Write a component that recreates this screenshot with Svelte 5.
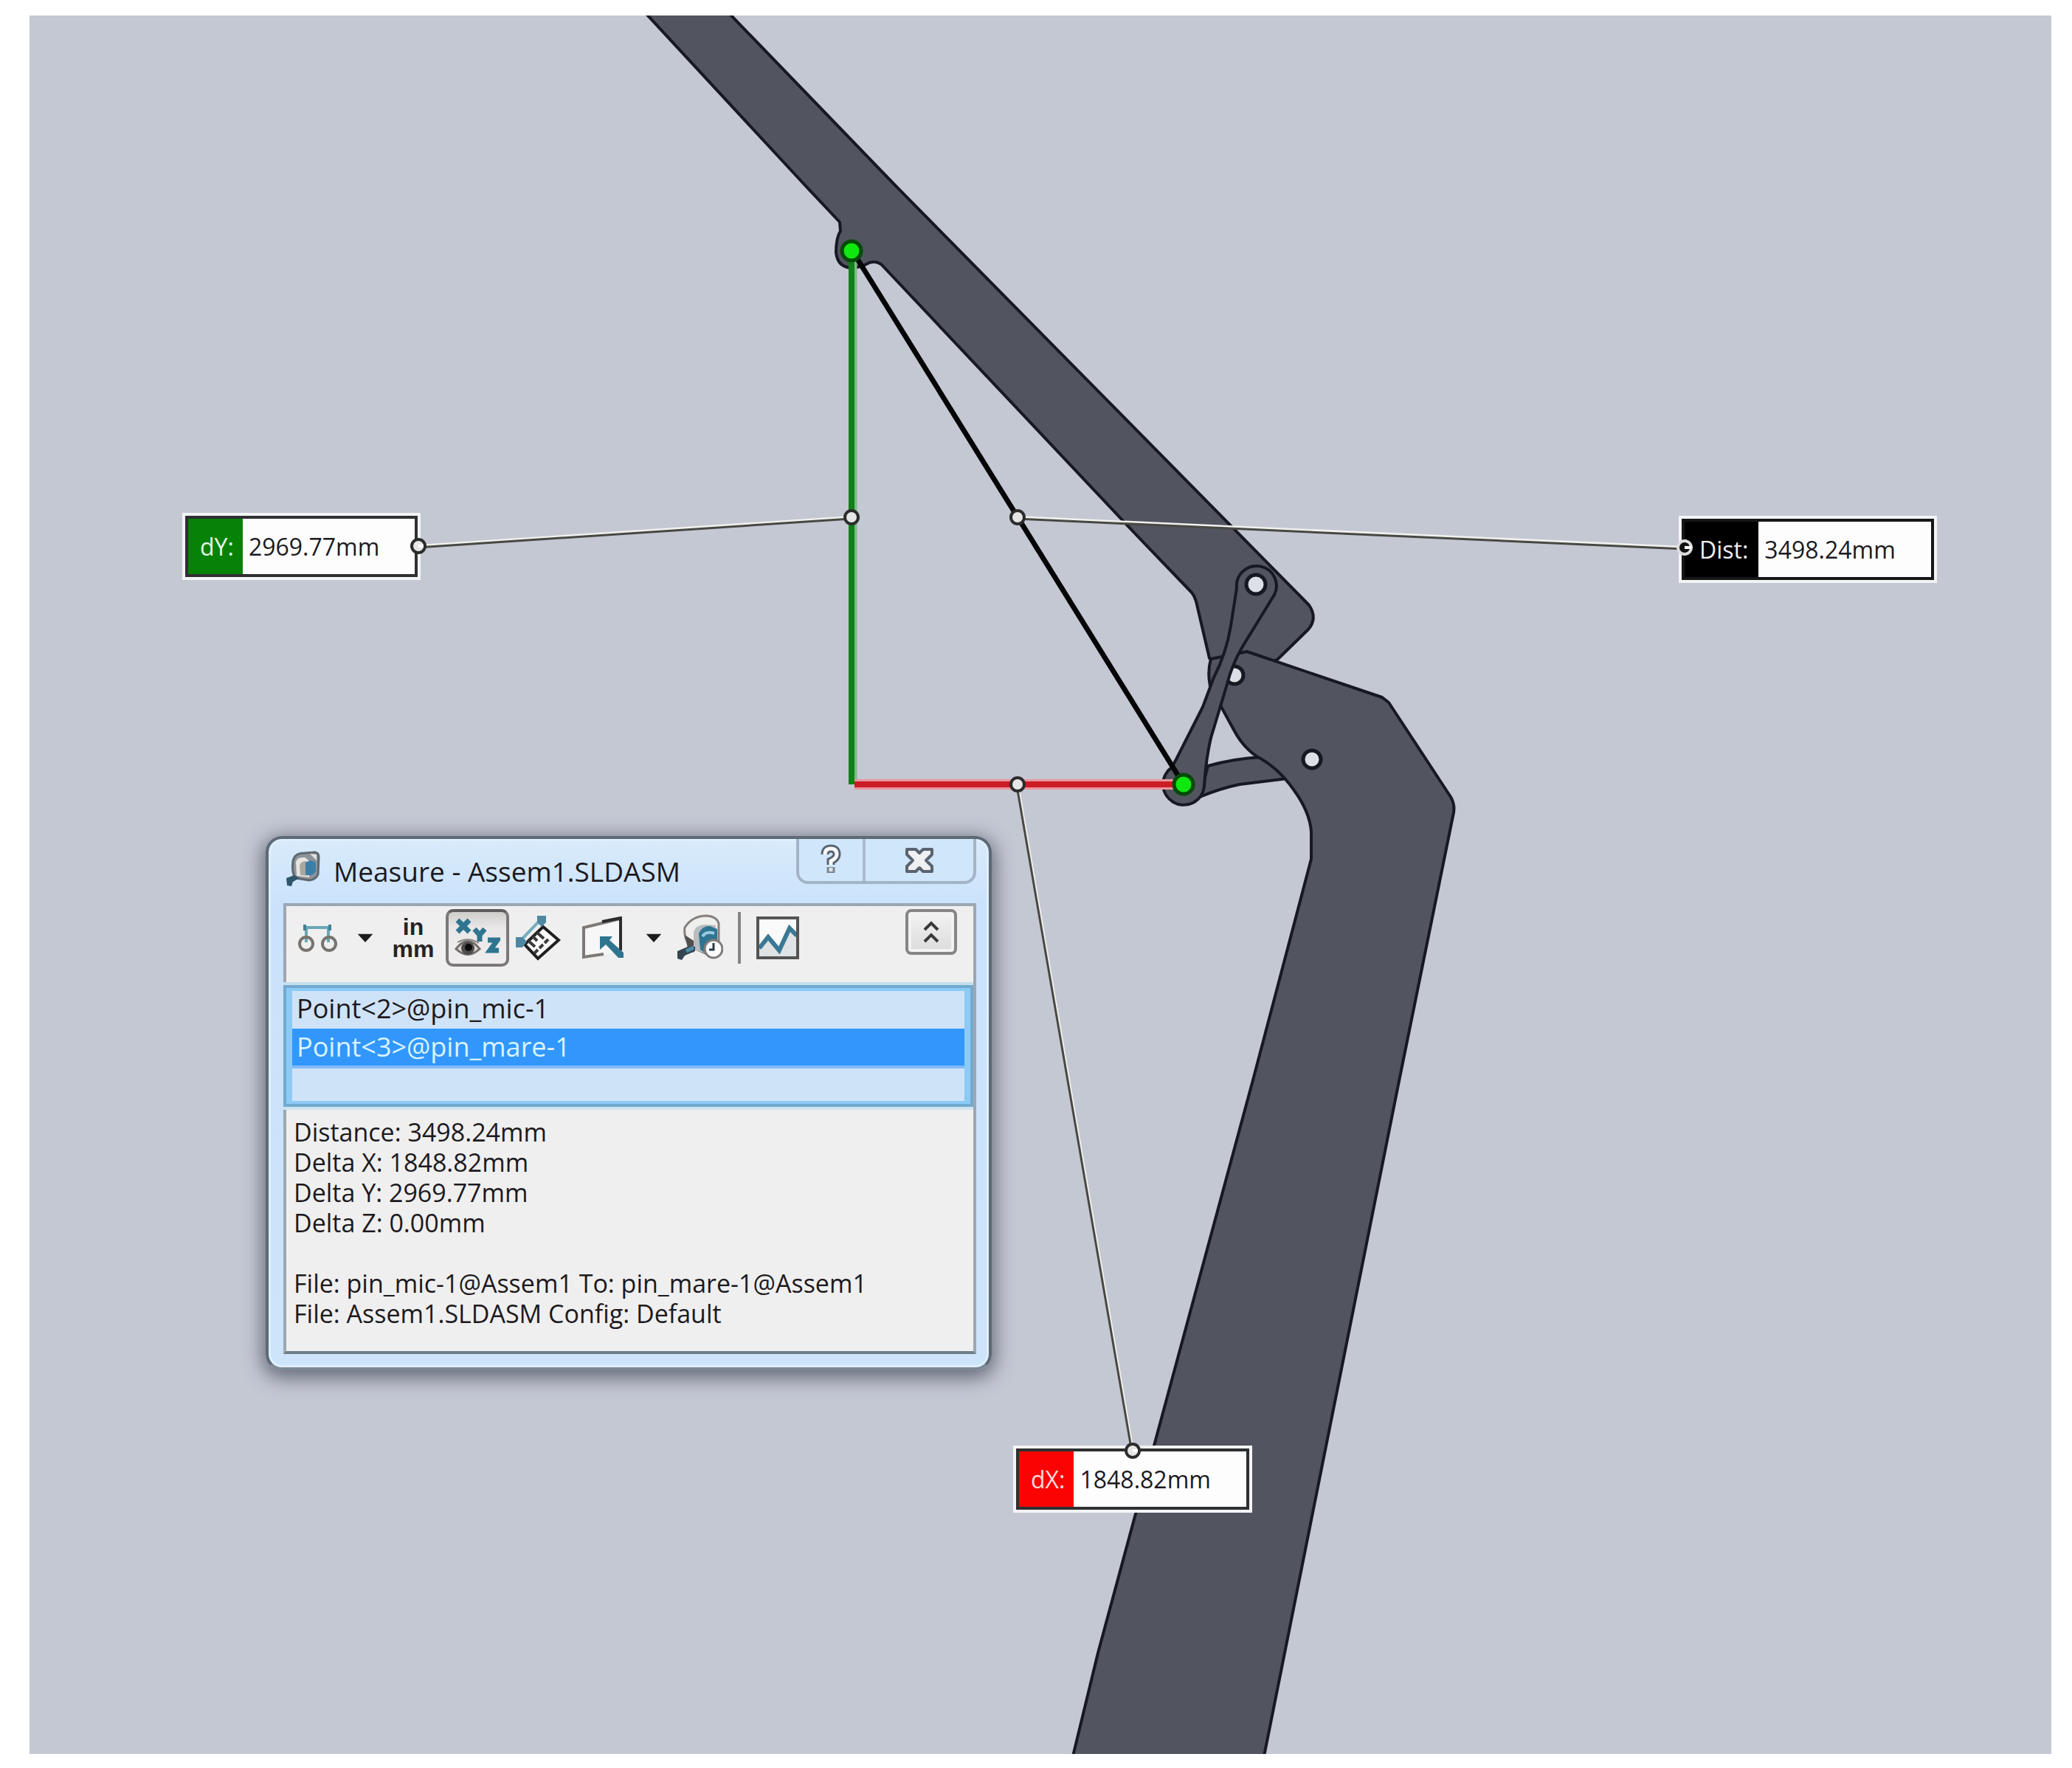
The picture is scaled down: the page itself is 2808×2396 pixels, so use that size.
<script>
  // Drawing coordinates of the viewport: every callout and window shares them with the model.
  const view = { x: 40, y: 21, w: 2740, h: 2356 };
  const left = (x) => `${((x - view.x) / view.w) * 100}%`;
  const top = (y) => `${((y - view.y) / view.h) * 100}%`;
  const box = `${view.x} ${view.y} ${view.w} ${view.h}`;

  const callouts = [
    { name: 'dY:', value: '2969.77mm', kind: 'dy', x: 247, y: 695 },
    { name: 'Dist:', value: '3498.24mm', kind: 'dist', x: 2275, y: 699 },
    { name: 'dX:', value: '1848.82mm', kind: 'dx', x: 1373, y: 1959 }
  ];

  const leaders = [
    [567, 740, 1154, 701],
    [1379, 701, 2283, 742],
    [1379, 1063, 1535, 1966]
  ];
  const handles = [
    [567, 740], [1154, 701], [1379, 701], [2283, 742], [1379, 1063], [1535, 1966]
  ];

  const picks = ['Point<2>@pin_mic-1', 'Point<3>@pin_mare-1', ''];
  let selected = $state(1);
  let showXyz = $state(true);

  const results = [
    'Distance: 3498.24mm',
    'Delta X: 1848.82mm',
    'Delta Y: 2969.77mm',
    'Delta Z: 0.00mm'
  ];
  const files = [
    'File: pin_mic-1@Assem1 To: pin_mare-1@Assem1',
    'File: Assem1.SLDASM Config: Default'
  ];
</script>

<main class="page">
  <div class="viewport">
    <svg class="layer" viewBox={box} aria-hidden="true">
      <g class="part">
        <path d="M876 19 L1090 250 L1138 301 L1139 313 Q1133 322 1133 342 Q1135 362 1154 363 Q1166 363 1178 356 Q1188 353 1195 359 L1540 725 L1615 803 Q1619 808 1621 815 L1639 892 L1680 920 L1732 893 L1773 853 Q1786 838 1774 820 L1212 250 L989 19 Z" />
        <path d="M1637 1038 Q1672 1028 1710 1026 L1745 1055 L1680 1063 Q1655 1068 1626 1080 Z" />
        <path d="M1690 883 L1873 945 L1882 952 L1966 1080 Q1973 1092 1969 1106 L1897 1460 L1713 2380 L1454 2380 L1488 2240 L1699 1460 L1777 1164 L1777 1127 Q1775 1100 1753 1070 Q1732 1040 1703 1025 Q1684 1012 1672 989 L1654 956 L1640 930 Q1636 910 1641 893 Z" />
      </g>
      <circle class="hole" cx="1673" cy="915" r="12" />
      <circle class="hole" cx="1778" cy="1029" r="12" />
      <path class="part" d="M1676 797 A27 27 0 1 1 1727 806 L1684 876 Q1669 902 1663 927 L1641 1000 Q1634 1030 1632 1066 A28 28 0 1 1 1588 1040 L1594 1029 L1630 958 L1645 918 Q1662 885 1668 848 Z" />
      <circle class="hole" cx="1702" cy="792" r="13" />

      <path class="dy-halo" d="M1157 345 V1063" />
      <path class="dy-line" d="M1154 345 V1063" />
      <path class="dx-halo" d="M1158 1063 H1600" />
      <path class="dx-line" d="M1158 1063 H1600" />
      <path class="dist-line" d="M1157 343 L1604 1063" />
      <circle class="pick" cx="1154" cy="340" r="13" />
      <circle class="pick" cx="1604" cy="1063" r="13" />
    </svg>

    {#each callouts as c}
      <dl class="callout {c.kind}" style:left={left(c.x)} style:top={top(c.y)}>
        <dt>{c.name}</dt>
        <dd>{c.value}</dd>
      </dl>
    {/each}

    <svg class="layer" viewBox={box} aria-hidden="true">
      {#each leaders as [x1, y1, x2, y2]}
        <line class="leader-light" {x1} {y1} {x2} {y2} />
        <line class="leader-dark" x1={x1 - 1} y1={y1 + 2} x2={x2 - 1} y2={y2 + 2} />
      {/each}
      {#each handles as [cx, cy], i}
        <circle class="handle" class:inverse={i === 3} {cx} {cy} r="9" />
      {/each}
      <path class="notch" d="M567 740 H574 M1535 1966 H1542" />
      <path class="notch" d="M2283 742 H2292" />
    </svg>

    <section class="dialog" style:left={left(360)} style:top={top(1133)} aria-labelledby="title">
      <header>
        <svg class="app-icon" viewBox="0 0 50 52" aria-hidden="true">
          <path d="M11 14 Q13 3 27 3 L41 2 Q46 3 46 8 L45 32 Q42 39 33 40 L14 37 Q9 28 11 14Z" fill="#8d9499" stroke="#5d6870" stroke-width="3" />
          <path d="M15 15 Q17 8 27 9 Q34 12 34 21 L33 36 L16 34Z" fill="#e7e5df" />
          <path d="M20 20 Q22 13 30 14 L31 34 L21 33Z" fill="#aaa79f" />
          <path d="M28 16 Q37 10 42 17 L42 28 Q36 36 28 32Z" fill="#3a7fa8" />
          <path d="M34 4 L43 5 L43 13Z" fill="#dfe2e2" />
          <path d="M2 37 L13 33 L20 37 L11 42 L9 48 L3 47Z" fill="#2f566b" />
        </svg>
        <h1 id="title">Measure - Assem1.SLDASM</h1>
        <div class="caption">
          <button class="help" aria-label="Help">
            <svg viewBox="0 0 28 44" aria-hidden="true">
              <path d="M6 14 Q6 6 14 6 Q22 6 22 14 Q22 19 14 23 V28" fill="none" stroke="#5a6470" stroke-width="11" />
              <path d="M14 31 V39" stroke="#7d8791" stroke-width="11" />
              <path d="M6 14 Q6 6 14 6 Q22 6 22 14 Q22 19 14 23 V28" fill="none" stroke="#f6f8fa" stroke-width="5" />
              <path d="M14 32 V37" stroke="#dde2e8" stroke-width="5" />
            </svg>
          </button>
          <button class="close" aria-label="Close">
            <svg viewBox="0 0 38 34" aria-hidden="true">
              <path d="M2 2 H14 L19 7 L24 2 H36 V9 L28 17 L36 25 V32 H24 L19 27 L14 32 H2 V25 L10 17 L2 9Z" fill="#eef0f2" stroke="#5a6470" stroke-width="4" stroke-linejoin="round" />
            </svg>
          </button>
        </div>
      </header>

      <div class="client">
        <div class="toolbar" role="toolbar" aria-label="Measure options">
          <button aria-label="Arc and circle measurements">
            <svg width="54" height="38" viewBox="0 0 54 38" aria-hidden="true">
              <path d="M11 25 V5 H41 V25" fill="none" stroke="#6ba6b5" stroke-width="4" />
              <path d="M9 1 V9 M43 1 V9" stroke="#3f8294" stroke-width="4" />
              <circle cx="11" cy="27" r="9" fill="none" stroke="#77736f" stroke-width="4" />
              <circle cx="42" cy="27" r="9" fill="none" stroke="#77736f" stroke-width="4" />
            </svg>
          </button>
          <button aria-label="Arc options">
            <svg width="22" height="12" viewBox="0 0 24 14" aria-hidden="true"><path d="M0 1 H24 L12 14Z" fill="#1d1b1b" /></svg>
          </button>
          <button class="units" aria-label="Units"><span>in</span><span>mm</span></button>
          <button class="toggle" aria-label="Show XYZ measurements" aria-pressed={showXyz} onclick={() => (showXyz = !showXyz)}>
            <svg width="62" height="56" viewBox="0 0 62 56" aria-hidden="true">
              <g fill="none" stroke="#2f7590" stroke-width="7">
                <path d="M4 4 L20 20 M20 4 L4 20" />
                <path d="M27 16 L34 24 L41 16 M34 23 V33" />
                <path d="M45 31 H58 L48 45 H60" />
              </g>
              <path d="M2 43 Q18 22 34 43 Q18 58 2 43Z" fill="#d8d5d3" stroke="#716d6b" stroke-width="3" />
              <circle cx="18" cy="42" r="9" fill="#4f4b4b" />
              <circle cx="19" cy="41" r="5" fill="#0c0a0a" />
              <path d="M4 34 Q18 26 33 35" fill="none" stroke="#8c8886" stroke-width="2" />
            </svg>
          </button>
          <button aria-label="Point-to-point">
            <svg width="62" height="62" viewBox="0 0 62 62" aria-hidden="true">
              <path d="M8 34 L34 7" stroke="#75aebd" stroke-width="4" />
              <path d="M13 40 L38 16 L59 34 L31 59Z" fill="#fbfbfb" stroke="#201f1f" stroke-width="4" />
              <path d="M18 35 L27 43 M24 29 L30 35 M30 24 L39 32 M26 52 L31 47 M33 45 L38 40 M40 38 L45 33" stroke="#3c3a3a" stroke-width="4" />
              <path d="M30 1 H42 V10 L36 16 L30 10Z" fill="#4f87a3" />
              <path d="M1 30 H10 L16 36 L10 44 H1Z" fill="#4f87a3" />
            </svg>
          </button>
          <button aria-label="Projected on">
            <svg width="58" height="58" viewBox="0 0 58 58" aria-hidden="true">
              <path d="M3 14 L53 3 V48 L36 50 L3 55Z" fill="#f7f7f7" />
              <path d="M53 3 L3 15 V55 L30 51" fill="none" stroke="#7d7977" stroke-width="4" />
              <path d="M28 7 L53 2 V46" fill="none" stroke="#2d2b2b" stroke-width="4" />
              <path d="M25 27 H42 L38 32 L57 49 V56 H50 L33 38 L25 45Z" fill="#2f7590" />
            </svg>
          </button>
          <button aria-label="Projection options">
            <svg width="22" height="12" viewBox="0 0 24 14" aria-hidden="true"><path d="M0 1 H24 L12 14Z" fill="#1d1b1b" /></svg>
          </button>
          <button aria-label="Measurement history">
            <svg width="62" height="64" viewBox="0 0 62 64" aria-hidden="true">
              <path d="M10 18 Q20 2 40 2 Q53 3 56 12 V36 L40 54 L18 44 Q8 32 10 18Z" fill="#efefed" stroke="#858180" stroke-width="3" />
              <path d="M10 28 L22 36 V52 L14 46Z" fill="#504f50" />
              <path d="M22 24 Q25 14 38 14 L52 15 V30 L36 52 L22 48Z" fill="#b9bcc0" />
              <path d="M29 26 Q34 15 44 16 L54 20 V36 L40 54 L31 48Z" fill="#2f7590" />
              <path d="M34 30 Q39 22 50 26" fill="none" stroke="#9cc9e4" stroke-width="4" />
              <path d="M0 50 L14 44 L24 44 L24 50 L10 56 L6 62 L0 60Z" fill="#35454f" />
              <path d="M12 50 L22 45" stroke="#4d8cab" stroke-width="5" />
              <circle cx="49" cy="47" r="12" fill="#fafafa" stroke="#807c7b" stroke-width="3" />
              <path d="M49 39 V48 H43" fill="none" stroke="#2b3a42" stroke-width="3" />
            </svg>
          </button>
          <span class="rule"></span>
          <button aria-label="Create sensor">
            <svg width="58" height="58" viewBox="0 0 58 58" aria-hidden="true">
              <rect x="2" y="2" width="54" height="54" fill="#fafafa" />
              <path d="M4 42 L17 30 L31 46 L45 17 L56 24 V56 H4Z" fill="#dfe3e6" />
              <path d="M4 43 L16 28 L31 46 L45 16 L55 26" fill="none" stroke="#3a7893" stroke-width="6" />
              <rect x="2" y="2" width="54" height="54" fill="none" stroke="#555353" stroke-width="4" />
            </svg>
          </button>
          <button class="collapse" aria-label="Collapse">
            <svg width="22" height="32" viewBox="0 0 22 32" aria-hidden="true">
              <path d="M2 13 L11 4 L20 13 M2 29 L11 20 L20 29" fill="none" stroke="#3a3838" stroke-width="4" />
            </svg>
          </button>
        </div>

        <ul class="picks" aria-label="Selected items">
          {#each picks as item, i}
            <li>
              <button class:selected={i === selected} aria-label={item || 'Empty'} onclick={() => (selected = i)}>{item}</button>
            </li>
          {/each}
        </ul>

        <div class="results">
          {#each results as line}<p>{line}</p>{/each}
          <div class="files">
            {#each files as line}<p>{line}</p>{/each}
          </div>
        </div>
      </div>
    </section>
  </div>
</main>

<style>
  :global(body) {
    background: #fff;
  }
  .page {
    box-sizing: border-box;
    padding: 21px 28px 19px 40px;
    font-family: 'Open Sans', 'Noto Sans', sans-serif;
    color: #1c1a1e;
  }
  .viewport {
    position: relative;
    aspect-ratio: 2740 / 2356;
    background: #c4c8d3;
    overflow: hidden;
  }
  .layer {
    position: absolute;
    inset: 0;
    width: 100%;
    height: 100%;
    pointer-events: none;
  }
  .part {
    fill: #52545f;
    stroke: #171922;
    stroke-width: 4;
    stroke-linejoin: round;
  }
  .hole {
    fill: #dcdfe6;
    stroke: #171922;
    stroke-width: 5;
  }
  .dy-line { stroke: #118018; stroke-width: 8; }
  .dy-halo { stroke: #7fb98a; stroke-width: 9; }
  .dx-line { stroke: #cc1c25; stroke-width: 8; }
  .dx-halo { stroke: #e9959c; stroke-width: 14; }
  .dist-line { stroke: #050507; stroke-width: 7; }
  .pick {
    fill: #0fe80f;
    stroke: #044a08;
    stroke-width: 5;
  }
  .leader-light { stroke: #f1f1ee; stroke-width: 4; }
  .leader-dark { stroke: #484843; stroke-width: 3; }
  .handle {
    fill: #e6e6e6;
    stroke: #2c2c2c;
    stroke-width: 4;
  }
  .handle.inverse {
    fill: #111;
    stroke: #dcdcdc;
  }
  .notch { stroke: #fff; stroke-width: 4; }

  .callout {
    position: absolute;
    display: flex;
    margin: 0;
    padding: 4px;
    border: 4px solid #f3f4f6;
    background: #2e3032;
    font-size: 32px;
    line-height: 75px;
    white-space: nowrap;
  }
  .callout dt {
    padding: 0 12px 0 16px;
    color: #e4f3e4;
  }
  .callout dd {
    margin: 0;
    padding: 0 48px 0 8px;
    background: #fdfdfd;
  }
  .dy dt { background: #078207; }
  .dx dt { background: #fb0303; color: #ffdada; }
  .dist { background: #161616; }
  .dist dt { background: #000; padding: 0 14px 0 20px; color: #eee; }

  .dialog {
    position: absolute;
    box-sizing: border-box;
    width: 984px;
    border: 4px solid #5d6974;
    border-bottom-color: #7c8893;
    border-radius: 22px;
    padding: 0 17px 18px 20px;
    background: linear-gradient(#d9ebfb, #cae2fb 90px, #cde4fa);
    box-shadow:
      inset 0 0 0 3px #deeffd,
      0 6px 26px 4px rgb(50 54 70 / 65%);
  }
  header {
    display: flex;
    height: 87px;
  }
  .app-icon {
    width: 50px;
    height: 52px;
    margin: 16px 16px 0 2px;
  }
  h1 {
    flex: 1;
    margin: 18px 0 0;
    font-size: 37px;
    line-height: 52px;
    font-weight: 400;
    white-space: nowrap;
  }
  button {
    margin: 0;
    padding: 0;
    border: 0;
    background: none;
    font: inherit;
    color: inherit;
  }
  .caption {
    box-sizing: border-box;
    display: flex;
    width: 244px;
    height: 61px;
    border: 4px solid #a3b4c7;
    border-top: 0;
    border-radius: 0 0 16px 16px;
    background: #d0e6fb;
  }
  .caption button {
    display: grid;
    place-items: center;
  }
  .help {
    width: 90px;
    border-right: 4px solid #a9bbce;
  }
  .help svg { width: 28px; height: 44px; }
  .close { flex: 1; }
  .close svg { width: 38px; height: 34px; }

  .client {
    border: 4px solid #9ba7b2;
    border-bottom-color: #6f7d89;
    background: #f0efef;
  }
  .toolbar {
    display: grid;
    grid-template-columns: 86px 42px 88px 86px 78px 98px 40px 86px 20px 84px 1fr;
    grid-auto-rows: 78px;
    padding: 4px 22px 25px 0;
  }
  .toolbar button {
    display: grid;
    place-items: center;
  }
  .toolbar .units {
    align-content: center;
    gap: 2px;
    font: bold 32px/28px 'Liberation Sans', Arial, sans-serif;
    color: #252323;
  }
  .toolbar .toggle {
    border: 4px solid #7b7979;
    border-top-color: #5d5b5b;
    border-radius: 10px;
    background: linear-gradient(#cfcccc, #e9e7e7 30%, #efeded);
  }
  .rule {
    justify-self: center;
    align-self: center;
    width: 4px;
    height: 70px;
    background: #858383;
  }
  .toolbar .collapse {
    box-sizing: border-box;
    justify-self: end;
    width: 70px;
    height: 62px;
    border: 4px solid #868484;
    border-radius: 8px;
    background: linear-gradient(#f4f3f3, #dcdbdb);
    box-shadow: inset 0 0 0 4px #f3f2f2;
  }

  .picks {
    margin: 0 0 0 -4px;
    padding: 0;
    list-style: none;
    border: 4px solid #72aacf;
    box-shadow: 0 -4px 0 #c5dfec, 0 4px 0 #cfe4f1;
    background: #8ccbf5;
  }
  .picks li {
    display: flex;
    height: 54px;
    margin: 0 8px;
    background: #cfe3f8;
  }
  .picks li:first-child {
    height: 51px;
    margin-top: 4px;
  }
  .picks li:last-child { height: 44px; margin-bottom: 4px; }
  .picks button {
    flex: 1;
    padding: 0 0 4px 6px;
    font-size: 36px;
    line-height: 46px;
    text-align: left;
    white-space: nowrap;
  }
  .picks .selected {
    padding-bottom: 0;
    border-bottom: 4px solid #86b9f6;
    background: #3297fd;
    color: #d9f3ff;
  }

  .results {
    padding: 14px 10px 30px;
    font-size: 34px;
    line-height: 41px;
  }
  .results p { margin: 0; }
  .files { padding-top: 41px; }
</style>
